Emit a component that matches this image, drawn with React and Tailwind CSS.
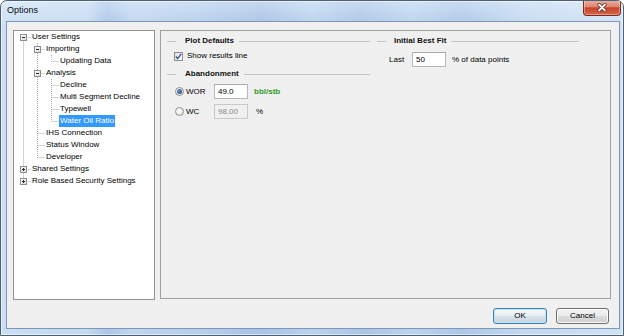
import React from "react";

const rows = [
  { t: "User Settings", l: 0, box: "minus" },
  { t: "Importing", l: 1, box: "minus" },
  { t: "Updating Data", l: 2 },
  { t: "Analysis", l: 1, box: "minus" },
  { t: "Decline", l: 2 },
  { t: "Multi Segment Decline", l: 2 },
  { t: "Typewell", l: 2 },
  { t: "Water Oil Ratio", l: 2, sel: true },
  { t: "IHS Connection", l: 1 },
  { t: "Status Window", l: 1 },
  { t: "Developer", l: 1 },
  { t: "Shared Settings", l: 0, box: "plus" },
  { t: "Role Based Security Settings", l: 0, box: "plus" },
];

const padFor = { 0: "pl-[18px]", 1: "pl-[32px]", 2: "pl-[46px]" };

function TreeLines() {
  const xs = [9.5, 23.5, 37.5];
  const cy = (i) => 6.5 + 12 * i;
  const stroke = "#ababab";
  const vLines = [
    [xs[0], cy(0), cy(12)],
    [xs[1], 12, cy(10)],
    [xs[2], 24, cy(2)],
    [xs[2], 48, cy(7)],
  ];
  return (
    <svg className="absolute left-0 top-0" width="140" height="170" viewBox="0 0 140 170">
      <defs>
        <linearGradient id="bx" x1="0" y1="0" x2="1" y2="1">
          <stop offset="0" stopColor="#ffffff" />
          <stop offset="1" stopColor="#d6d6d6" />
        </linearGradient>
      </defs>
      {vLines.map(([x, y1, y2], k) => (
        <line key={"v" + k} x1={x} x2={x} y1={y1} y2={y2} stroke={stroke} strokeDasharray="1 1" />
      ))}
      {rows.map((r, i) => (
        <line key={"h" + i} x1={xs[r.l]} x2={xs[r.l] + 7} y1={cy(i)} y2={cy(i)} stroke={stroke} strokeDasharray="1 1" />
      ))}
      {rows.map((r, i) =>
        r.box ? (
          <g key={"b" + i}>
            <rect x={xs[r.l] - 3} y={cy(i) - 3} width="6" height="6" fill="url(#bx)" stroke="#8f8f8f" />
            <line x1={xs[r.l] - 1.5} x2={xs[r.l] + 1.5} y1={cy(i)} y2={cy(i)} stroke="#2b2b2b" />
            {r.box === "plus" && (
              <line x1={xs[r.l]} x2={xs[r.l]} y1={cy(i) - 1.5} y2={cy(i) + 1.5} stroke="#2b2b2b" />
            )}
          </g>
        ) : null
      )}
    </svg>
  );
}

function Header({ text, gap }) {
  return (
    <div className="flex h-[12px] items-center">
      <div className="h-px w-[9px] bg-[#c3c3c3]" />
      <span className={"font-bold leading-[12px] text-[#111] " + gap}>{text}</span>
      <div className="ml-[5px] h-px flex-1 bg-[#c3c3c3]" />
    </div>
  );
}

function Radio({ on }) {
  return (
    <div className="flex h-[9px] w-[9px] items-center justify-center rounded-full border border-[#8e8f8f] bg-[radial-gradient(circle_at_35%_35%,#ffffff,#dcdcdc)]">
      {on && <div className="h-[5px] w-[5px] rounded-full bg-[radial-gradient(circle_at_35%_35%,#6a8fc4,#1b3d72)]" />}
    </div>
  );
}

function Box({ children, disabled }) {
  return (
    <div
      className={
        "flex h-[15px] w-[34px] items-center border pl-[3px] leading-[12px] " +
        (disabled
          ? "border-[#c9c9c9] bg-[#f0f0f0] text-[#8a8a8a]"
          : "border-[#b4b8c0] border-t-[#a5a9b1] bg-white text-black")
      }
    >
      {children}
    </div>
  );
}

export default function App() {
  return (
    <div className="relative flex h-[336px] w-[624px] flex-col overflow-hidden rounded-t-[7px] border border-[#4e6076] bg-[linear-gradient(180deg,rgba(255,255,255,0.35)_0%,rgba(255,255,255,0)_8%),linear-gradient(90deg,#cadff4_0%,#c4daf2_14%,#aac6e8_17%,#bed5ef_21%,#b5ceec_32%,#a6c3e6_42%,#b9d2ee_50%,#a9c5e7_58%,#bad3ee_66%,#abc7e8_74%,#c3d9f1_84%,#cfe2f5_100%)] font-['Liberation_Sans',Arial,sans-serif] text-[8px] text-black shadow-[inset_0_0_0_1px_rgba(255,255,255,0.55)]">
      {/* title bar */}
      <div className="flex h-[20px] shrink-0 items-start justify-between">
        <div className="ml-[6px] flex h-[20px] items-center text-[9px] text-[#0b0b0b]">Options</div>
        <div className="-mt-px mr-[2px] flex h-[16px] w-[38px] items-center justify-center rounded-b-[4px] border border-t-0 border-[#7b2a1f] bg-[linear-gradient(180deg,#eab1a4_0%,#de8774_45%,#c9442b_52%,#d5644a_100%)] shadow-[inset_0_0_0_1px_rgba(255,220,210,0.45)]">
          <svg width="10" height="9" viewBox="0 0 10 9">
            <path d="M2 1.5 L8 7.5 M8 1.5 L2 7.5" stroke="#5a1a12" strokeWidth="3.2" strokeLinecap="round" />
            <path d="M2 1.5 L8 7.5 M8 1.5 L2 7.5" stroke="#ffffff" strokeWidth="1.8" strokeLinecap="round" />
          </svg>
        </div>
      </div>

      {/* client */}
      <div className="ml-[5px] mr-[3px] flex h-[308px] w-[614px] flex-col border border-[#8196b2] bg-[#f0f0f0] pl-[6px] pr-[8px] pt-[8px] pb-[4px]">
        <div className="flex items-start gap-[5px]">
          {/* tree */}
          <div className="h-[270px] w-[142px] border border-[#8d9199] bg-white">
            <div className="relative">
              <TreeLines />
              {rows.map((r, i) => (
                <div key={i} className={"h-[12px] whitespace-nowrap leading-[12px] " + padFor[r.l]}>
                  {r.sel ? (
                    <span className="-ml-px inline-block h-[12px] bg-[#3399ff] px-px text-white">{r.t}</span>
                  ) : (
                    r.t
                  )}
                </div>
              ))}
            </div>
          </div>

          {/* panel */}
          <div className="flex h-[269px] w-[451px] gap-[7px] border border-[#a0a0a0] pl-[6px] pt-[4px]">
            {/* left column */}
            <div className="flex w-[203px] flex-col">
              <Header text="Plot Defaults" gap="ml-[9px]" />
              <div className="mt-[3px] flex h-[12px] items-center pl-[7px]">
                <div className="flex h-[9px] w-[9px] items-center justify-center border border-[#8e8f8f] bg-[linear-gradient(135deg,#dedede,#ffffff)]">
                  <svg width="7" height="7" viewBox="0 0 7 7">
                    <path d="M0.8 3.6 L2.7 5.6 L6.2 0.9" fill="none" stroke="#3c55a0" strokeWidth="1.4" />
                  </svg>
                </div>
                <span className="ml-[4px] leading-[12px]">Show results line</span>
              </div>
              <div className="mt-[6px]">
                <Header text="Abandonment" gap="ml-[9px]" />
              </div>
              <div className="mt-[4px] flex h-[15px] items-center pl-[8px]">
                <Radio on />
                <span className="ml-[2px] w-[28px] leading-[12px]">WOR</span>
                <Box>49.0</Box>
                <span className="ml-[6px] font-bold leading-[12px] text-[#2f9a2a]">bbl/stb</span>
              </div>
              <div className="mt-[5px] flex h-[15px] items-center pl-[8px]">
                <Radio />
                <span className="ml-[2px] w-[28px] leading-[12px]">WC</span>
                <Box disabled>98.00</Box>
                <span className="ml-[8px] leading-[12px]">%</span>
              </div>
            </div>

            {/* right column */}
            <div className="flex w-[202px] flex-col">
              <Header text="Initial Best Fit" gap="ml-[8px]" />
              <div className="mt-[5px] flex h-[15px] items-center pl-[12px]">
                <span className="w-[23px] leading-[12px]">Last</span>
                <Box>50</Box>
                <span className="ml-[6px] leading-[12px]">% of data points</span>
              </div>
            </div>
          </div>
        </div>

        {/* buttons */}
        <div className="mt-[8px] flex justify-end gap-[9px] pr-[2px]">
          <div className="flex h-[16px] w-[54px] items-center justify-center rounded-[3px] border border-[#3c7fb1] bg-[linear-gradient(180deg,#f4f8fb_0%,#e8eef3_50%,#d7e1e9_50%,#cad6df_100%)] shadow-[inset_0_0_0_1px_#bfe4f8]">
            OK
          </div>
          <div className="flex h-[16px] w-[53px] items-center justify-center rounded-[3px] border border-[#707070] bg-[linear-gradient(180deg,#f2f2f2_0%,#ebebeb_50%,#dddddd_50%,#cfcfcf_100%)] shadow-[inset_0_0_0_1px_#fbfbfb]">
            Cancel
          </div>
        </div>
      </div>
    </div>
  );
}
